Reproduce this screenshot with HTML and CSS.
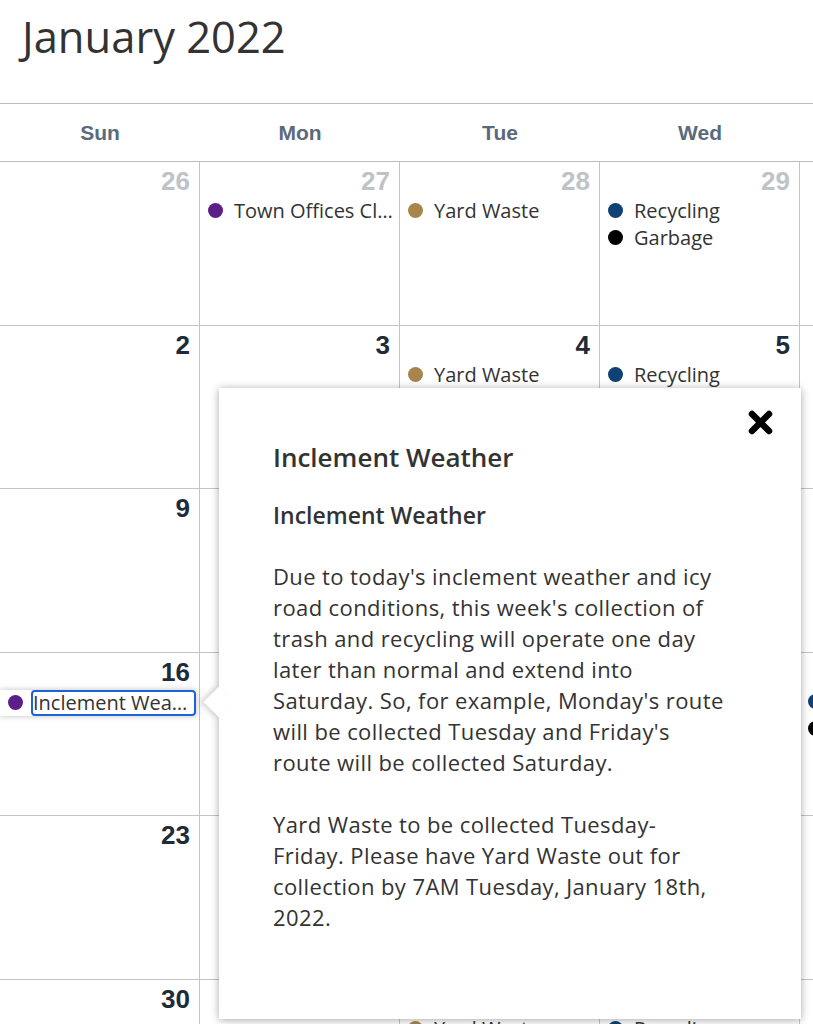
FILE: index.html
```html
<!DOCTYPE html>
<html lang="en">
<head>
    <meta charset="UTF-8">
    <meta name="viewport" content="width=device-width, initial-scale=1.0">
    <title>Collection Calendar</title>
    <link rel="stylesheet" href="styles.css">
</head>
<body>
    <h1 class="month-title">January 2022</h1>
    <div class="calendar">
        <div class="weekdays">
            <div>Sun</div><div>Mon</div><div>Tue</div><div>Wed</div><div>Thu</div><div>Fri</div><div>Sat</div>
        </div>
        <div class="days">
            <!-- week 1 -->
            <div class="day other"><span class="num">26</span></div>
            <div class="day other"><span class="num">27</span>
                <div class="event"><i class="dot purple"></i><span>Town Offices Closed</span></div>
            </div>
            <div class="day other"><span class="num">28</span>
                <div class="event"><i class="dot tan"></i><span>Yard Waste</span></div>
            </div>
            <div class="day other"><span class="num">29</span>
                <div class="event"><i class="dot blue"></i><span>Recycling</span></div>
                <div class="event"><i class="dot black"></i><span>Garbage</span></div>
            </div>
            <div class="day other"><span class="num">30</span></div>
            <div class="day other"><span class="num">31</span></div>
            <div class="day"><span class="num">1</span></div>

            <!-- week 2 -->
            <div class="day"><span class="num">2</span></div>
            <div class="day"><span class="num">3</span></div>
            <div class="day"><span class="num">4</span>
                <div class="event"><i class="dot tan"></i><span>Yard Waste</span></div>
            </div>
            <div class="day"><span class="num">5</span>
                <div class="event"><i class="dot blue"></i><span>Recycling</span></div>
                <div class="event"><i class="dot black"></i><span>Garbage</span></div>
            </div>
            <div class="day"><span class="num">6</span></div>
            <div class="day"><span class="num">7</span></div>
            <div class="day"><span class="num">8</span></div>

            <!-- week 3 -->
            <div class="day"><span class="num">9</span></div>
            <div class="day"><span class="num">10</span></div>
            <div class="day"><span class="num">11</span>
                <div class="event"><i class="dot tan"></i><span>Yard Waste</span></div>
            </div>
            <div class="day"><span class="num">12</span>
                <div class="event"><i class="dot blue"></i><span>Recycling</span></div>
                <div class="event"><i class="dot black"></i><span>Garbage</span></div>
            </div>
            <div class="day"><span class="num">13</span></div>
            <div class="day"><span class="num">14</span></div>
            <div class="day"><span class="num">15</span></div>

            <!-- week 4 -->
            <div class="day"><span class="num">16</span>
                <div class="event active"><i class="dot purple"></i><span class="focused">Inclement Weather</span></div>
            </div>
            <div class="day"><span class="num">17</span></div>
            <div class="day"><span class="num">18</span>
                <div class="event"><i class="dot tan"></i><span>Yard Waste</span></div>
            </div>
            <div class="day"><span class="num">19</span>
                <div class="event"><i class="dot blue"></i><span>Recycling</span></div>
            </div>
            <div class="day"><span class="num">20</span>
                <div class="event"><i class="dot blue"></i><span>Recycling</span></div>
                <div class="event"><i class="dot black"></i><span>Garbage</span></div>
            </div>
            <div class="day"><span class="num">21</span></div>
            <div class="day"><span class="num">22</span></div>

            <!-- week 5 -->
            <div class="day"><span class="num">23</span></div>
            <div class="day"><span class="num">24</span></div>
            <div class="day"><span class="num">25</span>
                <div class="event"><i class="dot tan"></i><span>Yard Waste</span></div>
            </div>
            <div class="day"><span class="num">26</span>
                <div class="event"><i class="dot blue"></i><span>Recycling</span></div>
                <div class="event"><i class="dot black"></i><span>Garbage</span></div>
            </div>
            <div class="day"><span class="num">27</span></div>
            <div class="day"><span class="num">28</span></div>
            <div class="day"><span class="num">29</span></div>

            <!-- week 6 -->
            <div class="day"><span class="num">30</span></div>
            <div class="day"><span class="num">31</span></div>
            <div class="day other"><span class="num">1</span>
                <div class="event"><i class="dot tan"></i><span>Yard Waste</span></div>
            </div>
            <div class="day other"><span class="num">2</span>
                <div class="event"><i class="dot blue"></i><span>Recycling</span></div>
                <div class="event"><i class="dot black"></i><span>Garbage</span></div>
            </div>
            <div class="day other"><span class="num">3</span></div>
            <div class="day other"><span class="num">4</span></div>
            <div class="day other"><span class="num">5</span></div>
        </div>

        <div class="popup">
            <button class="close" aria-label="Close">
                <svg width="25" height="25" viewBox="0 0 25 25">
                    <path d="M4 4 L21 21 M21 4 L4 21" stroke="#000" stroke-width="6.5" stroke-linecap="round"/>
                </svg>
            </button>
            <h2>Inclement Weather</h2>
            <h3>Inclement Weather</h3>
            <p>Due to today's inclement weather and icy road conditions, this week's collection of trash and recycling will operate one day later than normal and extend into Saturday. So, for example, Monday's route will be collected Tuesday and Friday's route will be collected Saturday.</p>
            <p>Yard Waste to be collected Tuesday-Friday. Please have Yard Waste out for collection by 7AM Tuesday, January 18th, 2022.</p>
        </div>
    </div>
</body>
</html>
```

FILE: styles.css
```css
* {
    box-sizing: border-box;
}
body {
    margin: 0;
    overflow: hidden;
    background: #fff;
    font-family: "Open Sans", "Liberation Sans", sans-serif;
    color: #333;
}
.month-title {
    margin: 0;
    padding: 10px 0 0 22px;
    font-size: 43.5px;
    line-height: 53px;
    font-weight: 400;
    color: #333;
}
.calendar {
    position: relative;
    margin-top: 40px;
    width: 1400px;
}
.weekdays {
    display: grid;
    grid-template-columns: repeat(7, 200px);
    height: 59px;
    border-top: 1px solid #bdbdbd;
    border-bottom: 1px solid #bdbdbd;
}
.weekdays div {
    text-align: center;
    line-height: 57px;
    font-family: "Liberation Sans", Arial, sans-serif;
    font-weight: bold;
    font-size: 21px;
    color: #5a6a7c;
}
.days {
    display: grid;
    grid-template-columns: repeat(7, 200px);
    grid-auto-rows: 163.5px;
}
.day {
    border-right: 1px solid #c4c4c4;
    border-bottom: 1px solid #c4c4c4;
    padding-top: 5px;
}
.num {
    display: block;
    text-align: right;
    padding-right: 9px;
    font-family: "Liberation Sans", Arial, sans-serif;
    font-weight: bold;
    font-size: 26px;
    line-height: 29px;
    color: #1e2b38;
}
.other .num {
    color: #bfc3c7;
}
.event {
    display: flex;
    align-items: center;
    gap: 11px;
    padding: 0 6px 0 8px;
    font-size: 20px;
    line-height: 27px;
    color: #333;
    white-space: nowrap;
}
.event:first-of-type {
    margin-top: 1px;
}
.event span {
    overflow: hidden;
    text-overflow: ellipsis;
}
.dot {
    flex: none;
    width: 15px;
    height: 15px;
    border-radius: 50%;
}
.purple { background: #5c1f88; }
.tan { background: #a9854b; }
.blue { background: #0f4174; }
.black { background: #000; }

.event.active {
    position: relative;
    margin-top: 3px;
    margin-right: 3px;
    padding-top: 2px;
    padding-bottom: 2px;
    padding-right: 2px;
    background: #fff;
    box-shadow: 0 0 6px rgba(0, 0, 0, 0.25);
    gap: 10px;
}
.focused {
    outline: 2px solid #1b63d6;
    border-radius: 2px;
    line-height: 22px;
    padding-right: 1px;
}

.popup {
    position: absolute;
    left: 219px;
    top: 285px;
    width: 582px;
    height: 631px;
    padding: 51px 76px 0 54px;
    background: #fff;
    box-shadow: 0 1px 8px rgba(0, 0, 0, 0.35);
}
.popup::before {
    content: "";
    position: absolute;
    left: -11px;
    top: 303px;
    width: 22px;
    height: 22px;
    background: #fff;
    transform: rotate(45deg);
    box-shadow: -3px 3px 5px rgba(0, 0, 0, 0.15);
}
.close {
    position: absolute;
    left: 529px;
    top: 22px;
    padding: 0;
    border: none;
    background: none;
    cursor: pointer;
}
.close svg {
    display: block;
}
.popup h2 {
    margin: 0 0 25px;
    font-size: 26px;
    line-height: 36px;
    font-weight: 600;
    color: #333;
}
.popup h3 {
    margin: 0 0 30px;
    font-size: 23px;
    line-height: 31px;
    font-weight: 600;
    color: #333;
}
.popup p {
    margin: 0 0 31px;
    font-size: 22px;
    line-height: 31px;
    letter-spacing: 0.4px;
    color: #333;
}
```
